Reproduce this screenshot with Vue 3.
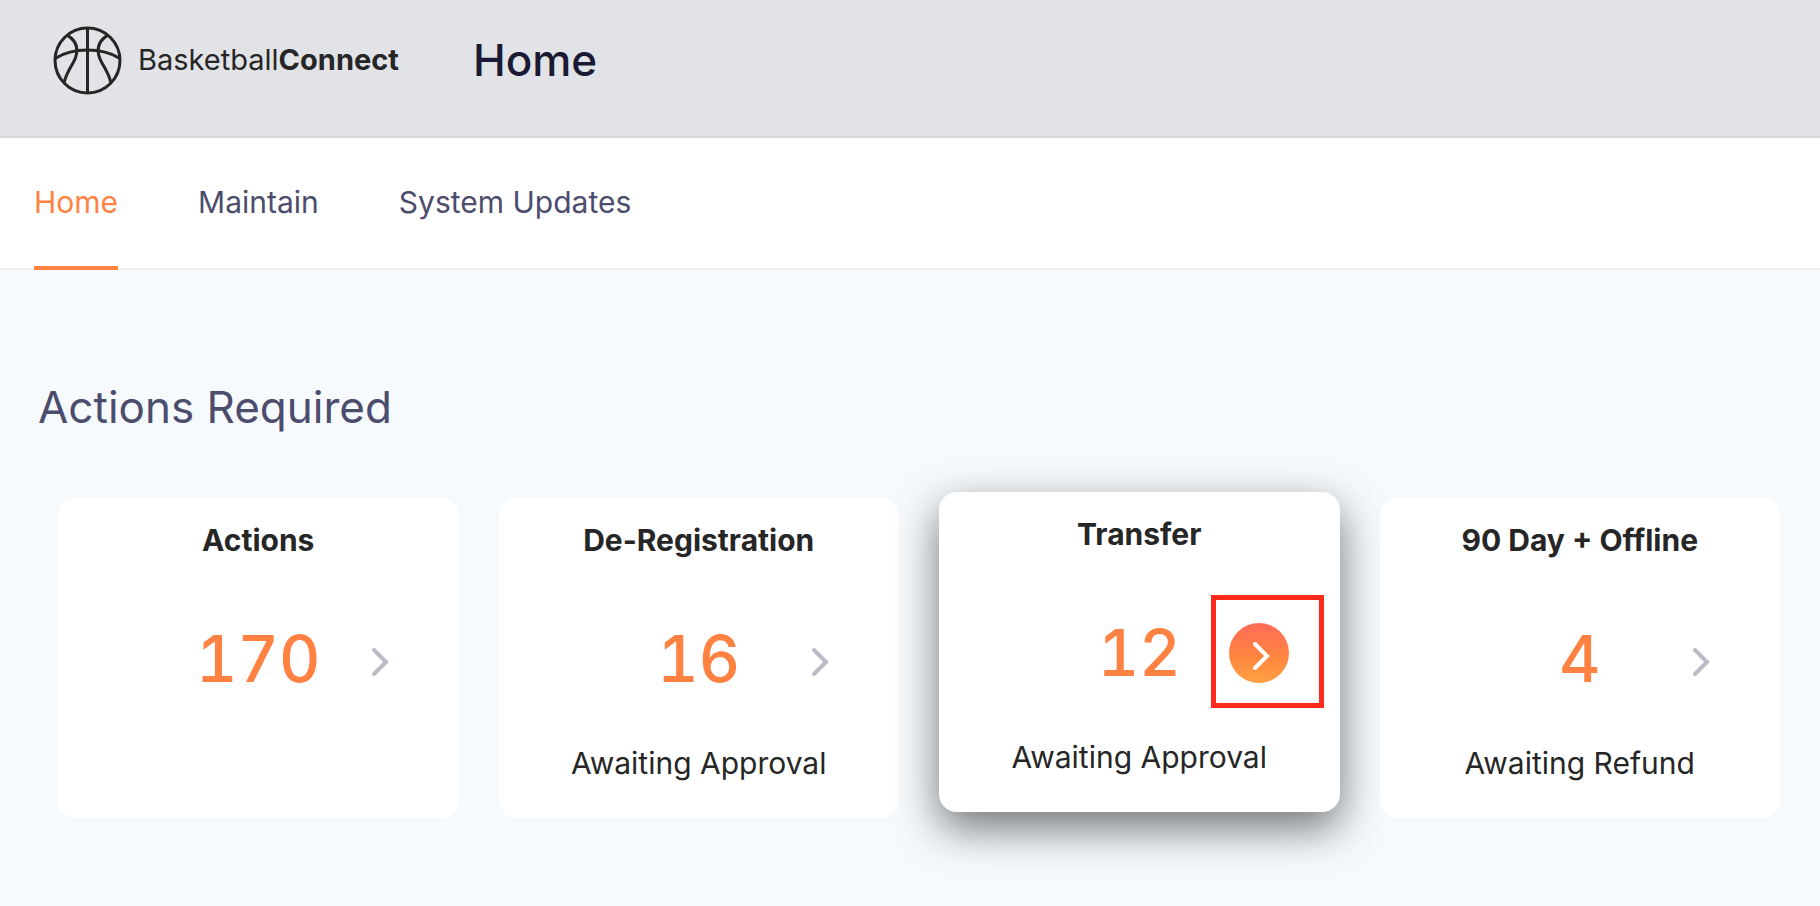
<script setup>
const tabs = [
  { label: 'Home', active: true },
  { label: 'Maintain', active: false },
  { label: 'System Updates', active: false },
]

const cards = [
  { title: 'Actions', count: 170, note: '', active: false },
  { title: 'De-Registration', count: 16, note: 'Awaiting Approval', active: false },
  { title: 'Transfer', count: 12, note: 'Awaiting Approval', active: true },
  { title: '90 Day + Offline', count: 4, note: 'Awaiting Refund', active: false },
]
</script>

<template>
  <div class="page">
    <header class="header">
      <a href="#" class="logo">
        <svg class="ball" viewBox="0 0 68 68" fill="none" stroke="#262626" stroke-width="3" aria-hidden="true">
          <circle cx="34" cy="34" r="32" />
          <path d="M34 2V66" />
          <path d="M2 32C20 21 48 21 66 32" />
          <path d="M14 9C25 16 26 25 20 36C14 46 12 50 11 56" />
          <path d="M54 9C43 16 42 25 48 36C54 46 56 50 57 56" />
        </svg>
        <span class="brand">Basketball<b>Connect</b></span>
      </a>
      <h1 class="page-title">Home</h1>
    </header>

    <nav class="tabs">
      <a v-for="tab in tabs" :key="tab.label" href="#" class="tab" :class="{ active: tab.active }">{{ tab.label }}</a>
    </nav>

    <main class="content">
      <h2 class="section-title">Actions Required</h2>
      <div class="cards">
        <article v-for="card in cards" :key="card.title" class="card" :class="{ raised: card.active }">
          <h3 class="card-title">{{ card.title }}</h3>
          <div class="card-row">
            <span class="count">{{ card.count }}</span>
            <button type="button" class="open" :aria-label="'Open ' + card.title">
              <svg viewBox="0 0 60 60" fill="none" stroke="currentColor" stroke-width="4" stroke-linecap="round" aria-hidden="true">
                <path d="M26 21L38 33L26 45" />
              </svg>
              <span v-if="card.active" class="marker"></span>
            </button>
          </div>
          <p class="note">{{ card.note }}</p>
        </article>
      </div>
    </main>
  </div>
</template>

<style>
body {
  margin: 0;
  background: #f6fafd;
}
</style>

<style scoped>
.page {
  font-family: Inter, "Liberation Sans", sans-serif;
  background: #f6fafd;
}

.header {
  display: flex;
  align-items: center;
  gap: 74px;
  box-sizing: border-box;
  height: 138px;
  padding: 0 53px 16px;
  border-bottom: 2px solid #d5d6db;
  background: #e2e3e6;
}

.logo {
  display: flex;
  align-items: center;
  gap: 16px;
  color: #262626;
  text-decoration: none;
}

.ball {
  width: 69px;
  height: 69px;
}

.brand {
  font-size: 29px;
  line-height: 36px;
}

.brand b {
  font-weight: 700;
}

.page-title {
  margin: 0;
  font-size: 44px;
  font-weight: 500;
  line-height: 52px;
  color: #1a1a35;
}

.tabs {
  display: flex;
  gap: 80px;
  padding: 0 34px;
  border-bottom: 2px solid #eff0f2;
  background: #fff;
}

.tab {
  margin-bottom: -2px;
  border-bottom: 4px solid transparent;
  font-size: 30px;
  line-height: 128px;
  color: #4c4c6d;
  text-decoration: none;
}

.tab.active {
  border-color: #ff8243;
  color: #ff8243;
}

.content {
  padding: 110px 40px 80px 38px;
}

.section-title {
  margin: 0 0 64px;
  font-size: 44px;
  font-weight: 400;
  line-height: 54px;
  color: #4c4c6d;
}

.cards {
  display: grid;
  grid-template-columns: repeat(4, 1fr);
  gap: 40px;
  padding-left: 20px;
}

.card {
  box-sizing: border-box;
  min-height: 320px;
  padding: 24px 51px;
  border-radius: 18px;
  background: #fff;
  color: #262626;
  text-align: center;
}

.card.raised {
  margin: -6px 0 6px;
  box-shadow: 0 16px 44px rgba(0, 0, 0, 0.54);
}

.card-title {
  margin: 0 -40px;
  font-size: 30px;
  font-weight: 700;
  line-height: 36px;
}

.card-row {
  display: grid;
  grid-template-columns: 1fr auto 1fr;
  align-items: center;
  margin: 61px 0 46px;
}

.count {
  grid-column: 2;
  font-size: 64px;
  font-weight: 500;
  font-variant-numeric: tabular-nums;
  line-height: 80px;
  color: #ff8243;
}

.open {
  position: relative;
  justify-self: end;
  width: 60px;
  height: 60px;
  padding: 0;
  border: 0;
  border-radius: 50%;
  background: none;
  color: #bbbbc6;
}

.raised .open {
  background: linear-gradient(#ff6b59, #ff8540 55%, #ffa143);
  color: #fff;
}

.open svg {
  display: block;
}

.marker {
  position: absolute;
  top: -28px;
  left: -18px;
  width: 103px;
  height: 103px;
  border: 5px solid #ff2a1b;
}

.note {
  margin: 0 -40px;
  font-size: 30px;
  font-weight: 400;
  line-height: 36px;
}
</style>
